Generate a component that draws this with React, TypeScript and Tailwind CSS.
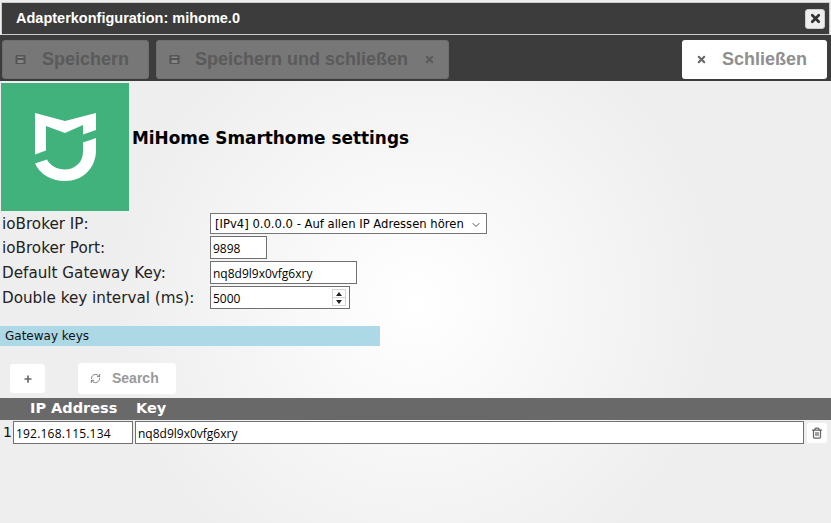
import { X, RefreshCw, Plus, Trash2, ChevronDown } from 'lucide-react';

const labelFont = "font-['DejaVu_Sans',sans-serif]";
const btnFont = "font-['Liberation_Sans',Arial,sans-serif]";
const inputClass =
  "block h-full border border-[#707070] bg-white px-[2px] pt-[2px] text-[12px] text-black outline-none font-['Open_Sans',sans-serif]";

function MiLogo() {
  return (
    <div className="flex h-[128px] w-[128px] shrink-0 items-center justify-center bg-[#42b27d]">
      <svg width="128" height="128" viewBox="0 0 128 128">
        <path d="M34 30 L64 38 L95 30 L95 47 L82 51.5 L82 42 L64 50 L45 43 L45 67.5 L34 71.5 Z" fill="#fff" />
        <path
          d="M95 55 L82 59.5 L82 69 C82 79 74 86.5 64 86.5 C56 86.5 49 82.5 46 76.5 L34 80.5 C39 91 50 98 64 98 C82 98 95 85 95 67 Z"
          fill="#fff"
        />
      </svg>
    </div>
  );
}

function SaveIcon() {
  return (
    <svg width="11" height="11" viewBox="0 0 11 11" className="shrink-0">
      <path d="M1.5 1h8a1 1 0 0 1 1 1v7a1 1 0 0 1-1 1h-8a1 1 0 0 1-1-1V2a1 1 0 0 1 1-1z" fill="#555" />
      <rect x="2.5" y="2.5" width="6" height="1.5" fill="#888" />
      <rect x="2.5" y="6" width="6" height="3" fill="#888" />
    </svg>
  );
}

function FormRow({ label, className, children }: { label: string; className: string; children: React.ReactNode }) {
  return (
    <div className={`flex items-center ${className}`}>
      <label className={`w-[208px] whitespace-nowrap pl-[2px] pt-[2px] text-[15.2px] leading-none text-[#222] ${labelFont}`}>{label}</label>
      {children}
    </div>
  );
}

export default function App() {
  return (
    <div className={`flex h-[523px] w-[831px] flex-col overflow-hidden bg-[#eee] ${btnFont}`}>
      {/* title */}
      <div className="mx-[1px] mt-[2px] flex h-[33px] items-center justify-between border border-[#ccc] bg-[#3c3c3c] pl-[14px] pr-[4px]">
        <span className="text-[14.5px] font-bold text-white">Adapterkonfiguration: mihome.0</span>
        <button className="flex h-[20px] w-[20px] items-center justify-center rounded-[3px] border border-[#ccc] bg-[#eee]">
          <X size={13} strokeWidth={5} className="text-[#333]" />
        </button>
      </div>

      {/* toolbar */}
      <div className="flex h-[46px] items-center justify-between bg-[#3c3c3c] pl-[2px] pr-[4px] pt-[2px]">
        <div className="flex gap-[7px]">
          <button className="flex h-[39px] w-[147px] items-center rounded-[3px] border border-[#6f6f6f] bg-[#777] pl-[12px] text-[18px] font-bold text-[#5a5a5a]">
            <SaveIcon />
            <span className="ml-[16px]">Speichern</span>
          </button>
          <button className="flex h-[39px] w-[293px] items-center rounded-[3px] border border-[#6f6f6f] bg-[#777] pl-[12px] text-[18px] font-bold text-[#5a5a5a]">
            <SaveIcon />
            <span className="ml-[15px]">Speichern und schließen</span>
            <X size={11} strokeWidth={4.5} className="ml-[16px]" />
          </button>
        </div>
        <button className="flex h-[39px] w-[145px] items-center rounded-[3px] bg-white pl-[14px] text-[18px] font-bold text-[#8f8f8f]">
          <X size={11} strokeWidth={4.5} className="text-[#666]" />
          <span className="ml-[15px]">Schließen</span>
        </button>
      </div>

      {/* content */}
      <div className="flex-1 bg-[radial-gradient(circle_at_center,#ffffff_0%,#eeeeee_65%)]">
        <div className="ml-[1px] mt-[2px] flex items-center">
          <MiLogo />
          <h1 className={`mb-[17px] ml-[3px] text-[16.9px] font-bold text-black ${labelFont}`}>MiHome Smarthome settings</h1>
        </div>

        <div className="mt-[2px]">
          <FormRow label="ioBroker IP:" className="h-[21px]">
            <div className="ml-[2px] flex h-[21px] w-[277px] items-center justify-between border border-[#767676] bg-white pl-[4px] pr-[4px] pt-[2px] text-[11.6px] text-black">
              <span className={`whitespace-nowrap ${labelFont}`}>[IPv4] 0.0.0.0 - Auf allen IP Adressen hören</span>
              <ChevronDown size={12} className="shrink-0 text-[#555]" />
            </div>
          </FormRow>
          <FormRow label="ioBroker Port:" className="mt-[2px] h-[23px]">
            <input readOnly value="9898" className={`ml-[2px] w-[57px] ${inputClass}`} />
          </FormRow>
          <FormRow label="Default Gateway Key:" className="mt-[2px] h-[23px]">
            <input readOnly value="nq8d9l9x0vfg6xry" className={`ml-[2px] w-[147px] ${inputClass}`} />
          </FormRow>
          <FormRow label="Double key interval (ms):" className="mt-[2px] h-[23px]">
            <div className="ml-[2px] flex h-full w-[140px] items-center justify-between border border-[#707070] bg-white pl-[2px] pr-[3px] text-[12px] text-black font-['Open_Sans',sans-serif]">
              <span className="pt-[2px]">5000</span>
              <div className="flex h-[17px] w-[14px] flex-col gap-[1px] bg-[#d4d4d4] p-[1px]">
                <div className="flex flex-1 items-center justify-center bg-white">
                  <svg width="6" height="4" viewBox="0 0 6 4"><path d="M3 0 L6 4 L0 4 Z" fill="#222" /></svg>
                </div>
                <div className="flex flex-1 items-center justify-center bg-white">
                  <svg width="6" height="4" viewBox="0 0 6 4"><path d="M0 0 L6 0 L3 4 Z" fill="#222" /></svg>
                </div>
              </div>
            </div>
          </FormRow>
        </div>

        <div className={`mt-[17px] flex h-[20px] w-[380px] items-center bg-[#add8e6] pl-[5px] text-[12px] text-[#111] ${labelFont}`}>
          Gateway keys
        </div>

        <div className="ml-[10px] mt-[17px] flex items-center">
          <button className="flex h-[29px] w-[35px] items-center justify-center rounded-[3px] bg-white text-[#666]">
            <Plus size={10} strokeWidth={4} />
          </button>
          <button className="ml-[33px] flex h-[31px] w-[98px] items-center rounded-[3px] bg-white pl-[12px] text-[14px] font-bold text-[#999]">
            <RefreshCw size={11} strokeWidth={2} className="text-[#777]" />
            <span className="ml-[11px]">Search</span>
          </button>
        </div>

        <div className={`mt-[4px] flex h-[22px] items-center bg-[#696969] pl-[30px] text-[14.5px] font-bold text-white ${labelFont}`}>
          <span className="w-[106px]">IP Address</span>
          <span>Key</span>
        </div>

        <div className="mt-[1px] flex h-[23px] items-center">
          <span className={`w-[13px] pl-[3px] text-[14px] text-[#111] ${labelFont}`}>1</span>
          <input readOnly value="192.168.115.134" className={`w-[120px] tracking-[0.2px] ${inputClass}`} />
          <input readOnly value="nq8d9l9x0vfg6xry" className={`ml-[2px] w-[669px] ${inputClass}`} />
          <button className="ml-[3px] flex h-[20px] w-[20px] items-center justify-center rounded-[3px] bg-white text-[#666]">
            <Trash2 size={12} strokeWidth={2.5} />
          </button>
        </div>
      </div>
    </div>
  );
}
